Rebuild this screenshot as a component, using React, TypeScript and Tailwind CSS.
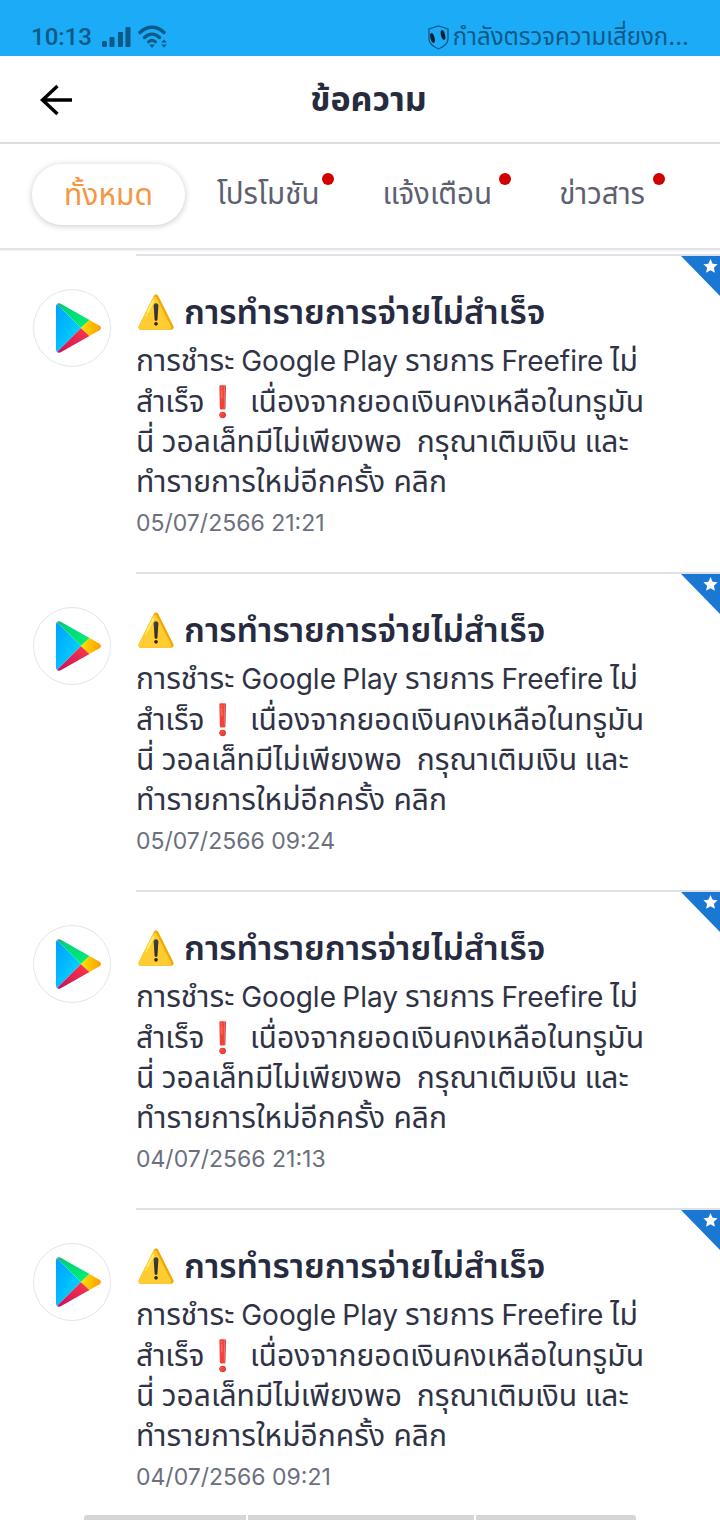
import React from "react";

const FONT = "font-['Inter','Noto_Sans','Noto_Sans_Thai','DejaVu_Sans',sans-serif]";

function PlayLogo() {
  return (
    <svg width="46" height="52" viewBox="0 0 46 52">
      <defs>
        <linearGradient id="pb" x1="0" y1="0" x2="1" y2="1">
          <stop offset="0" stopColor="#00a0ff" />
          <stop offset="0.5" stopColor="#00beff" />
          <stop offset="1" stopColor="#00e3ff" />
        </linearGradient>
        <linearGradient id="pg" x1="0" y1="0" x2="1" y2="1">
          <stop offset="0" stopColor="#32a071" />
          <stop offset="0.2" stopColor="#00d47a" />
          <stop offset="1" stopColor="#00f076" />
        </linearGradient>
        <linearGradient id="pr" x1="1" y1="0" x2="0" y2="1">
          <stop offset="0" stopColor="#ff3a44" />
          <stop offset="1" stopColor="#c31162" />
        </linearGradient>
        <linearGradient id="py" x1="0" y1="0" x2="1" y2="0">
          <stop offset="0" stopColor="#ffe000" />
          <stop offset="1" stopColor="#ff9c00" />
        </linearGradient>
      </defs>
      <path d="M1 2 C0.4 2.6 0 3.6 0 5 V47 C0 48.400 0.400 49.400 1 50 L25 26 Z" fill="url(#pb)" />
      <path d="M1 2 C2 1 3.600 1 5.200 1.900 L33.500 18 L25 26 Z" fill="url(#pg)" />
      <path d="M1 50 C2 51 3.600 51 5.200 50.100 L33.500 34 L25 26 Z" fill="url(#pr)" />
      <path d="M33.500 18 L43.500 23.700 C45.500 24.900 45.500 27.100 43.500 28.300 L33.500 34 L25 26 Z" fill="url(#py)" />
    </svg>
  );
}

function Corner() {
  return (
    <svg className="absolute right-0 top-[2px]" width="39" height="40" viewBox="0 0 39 40">
      <path d="M0 0 H39 V40 Z" fill="#1a78d2" />
      <path d="M29.500 3 L31.600 7.700 L36.600 8.300 L32.900 11.700 L33.900 16.700 L29.500 14.200 L25.100 16.700 L26.100 11.700 L22.400 8.300 L27.400 7.700 Z" fill="#ffffff" />
    </svg>
  );
}

function Message({ date }: { date: string }) {
  return (
    <div className="relative flex h-[318px] shrink-0">
      <div className="w-[136px] shrink-0 pl-[33px] pt-[35px]">
        <div className="flex h-[78px] w-[78px] items-center justify-center rounded-full border border-[#e2e4ea] bg-white pl-[14px]">
          <PlayLogo />
        </div>
      </div>
      <div className="flex-1 border-t-2 border-[#dfe1e7] pt-[33px]">
        <div className="flex h-[46px] items-center whitespace-nowrap text-[34px] font-semibold leading-[46px] text-[#272b3f]">
          <span className="mr-[8px] text-[32px]">⚠️</span>
          <span>การทำรายการจ่ายไม่สำเร็จ</span>
        </div>
        <div className="mt-[5px] whitespace-pre text-[30px] leading-[40px] text-[#2f3345]">
          <div className="[word-spacing:-1.5px]">
            การชำระ <span className="text-[28px]">Google Play</span> รายการ <span className="text-[28px]">Freefire</span> ไม่
          </div>
          <div>สำเร็จ❗ เนื่องจากยอดเงินคงเหลือในทรูมัน</div>
          <div className="[word-spacing:-1px]">นี่ วอลเล็ทมีไม่เพียงพอ  กรุณาเติมเงิน และ</div>
          <div>ทำรายการใหม่อีกครั้ง คลิก</div>
        </div>
        <div className="mt-[5px] text-[23px] leading-[34px] text-[#6b6f7e]">{date}</div>
      </div>
      <Corner />
    </div>
  );
}

function Tab({ label, className, dotClass }: { label: string; className: string; dotClass: string }) {
  return (
    <div className={`relative -mt-[2px] text-[29.5px] leading-[44px] text-[#5c6070] ${className}`}>
      {label}
      <span className={`absolute top-[2px] h-3 w-3 rounded-full bg-[#cf0000] ${dotClass}`} />
    </div>
  );
}

export default function App() {
  return (
    <div className={`${FONT} relative flex h-[1520px] w-[720px] flex-col overflow-hidden bg-white`}>
      <div className="flex h-[56px] shrink-0 items-end justify-between bg-[#1babf7] pb-[1px] pl-[31px] pr-[31px] text-[#0d5a88]">
        <div className="flex items-center">
          <span className="font-['Roboto',sans-serif] text-[24px] leading-[36px] font-medium">10:13</span>
          <svg className="ml-[9px]" width="30" height="20" viewBox="0 0 30 20">
            <rect x="1" y="14" width="5" height="6" rx="1.500" fill="#0d5a88" />
            <rect x="8.500" y="10" width="5" height="10" rx="1" fill="#0d5a88" />
            <rect x="17" y="5" width="5" height="15" rx="1" fill="#0d5a88" />
            <rect x="24.500" y="0" width="5" height="20" rx="1" fill="#0d5a88" />
          </svg>
          <svg className="ml-[7px]" width="30" height="24" viewBox="0 0 30 24" fill="none">
            <path d="M2 7.500 C9 0.500 19 0.500 26 7.500" stroke="#0d5a88" strokeWidth="3.400" strokeLinecap="round" />
            <path d="M6.500 12.500 C11 8 17 8 21.500 12.500" stroke="#0d5a88" strokeWidth="3.400" strokeLinecap="round" />
            <path d="M10.500 16.800 C13 14.800 15 14.800 17.500 16.800" stroke="#0d5a88" strokeWidth="3" strokeLinecap="round" />
            <path d="M11 19.500 H17 L14 23 Z" fill="#0d5a88" />
            <path d="M23 17.500 L26 14.500 L29 17.500 Z M23 19.500 L26 22.500 L29 19.500 Z" fill="#0d5a88" />
          </svg>
        </div>
        <div className="flex items-center">
          <svg width="21" height="25" viewBox="0 0 21 25" fill="none">
            <path d="M10.500 1 L20 4 V14 C20 18.500 15 22 10.500 24 C6 22 1 18.500 1 14 V4 Z" stroke="#0d5a88" strokeWidth="1.300" />
            <ellipse cx="4.500" cy="13" rx="2" ry="5" transform="rotate(-15 4.500 13)" fill="#0b1d2a" />
            <ellipse cx="15" cy="10" rx="2" ry="5" transform="rotate(-15 15 10)" fill="#0b1d2a" />
          </svg>
          <span className="ml-[4px] text-[24px] leading-[36px]">กำลังตรวจความเสี่ยงก...</span>
        </div>
      </div>

      <div className="relative flex h-[88px] shrink-0 items-center justify-center border-b-2 border-[#dcdde2] pl-[17px]">
        <svg className="absolute left-[39px] top-[27px]" width="36" height="34" viewBox="0 0 36 34" fill="none">
          <path d="M33 17 H4 M18.500 3 L3.500 17 L18.500 31" stroke="#000000" strokeWidth="3.400" strokeLinejoin="miter" />
        </svg>
        <span className="text-[34px] font-bold leading-[44px] text-[#272b3f]">ข้อความ</span>
      </div>

      <div className="flex h-[106px] shrink-0 items-center border-b-2 border-[#e2e3e7] pb-[4px] pl-[32px] shadow-[0_1px_2px_rgba(0,0,0,0.06)]">
        <div className="flex h-[61px] w-[153px] items-center justify-center rounded-[30px] bg-white text-[30px] text-[#f59643] shadow-[0_1px_6px_rgba(0,0,0,0.22)]">
          ทั้งหมด
        </div>
        <Tab label="โปรโมชัน" className="ml-[32px]" dotClass="-right-[14px]" />
        <Tab label="แจ้งเตือน" className="ml-[63px]" dotClass="-right-[19px]" />
        <Tab label="ข่าวสาร" className="ml-[67px]" dotClass="-right-[20px]" />
      </div>

      <div className="flex flex-col pt-[4px]">
        <Message date="05/07/2566 21:21" />
        <Message date="05/07/2566 09:24" />
        <Message date="04/07/2566 21:13" />
        <Message date="04/07/2566 09:21" />
      </div>
      <div className="absolute bottom-0 left-[84px] flex h-[5px] gap-[2px]">
        <div className="w-[162px] rounded-tl-[3px] bg-[#d6d6d6]" />
        <div className="w-[226px] bg-[#d6d6d6]" />
        <div className="w-[160px] rounded-tr-[3px] bg-[#d6d6d6]" />
      </div>
    </div>
  );
}
